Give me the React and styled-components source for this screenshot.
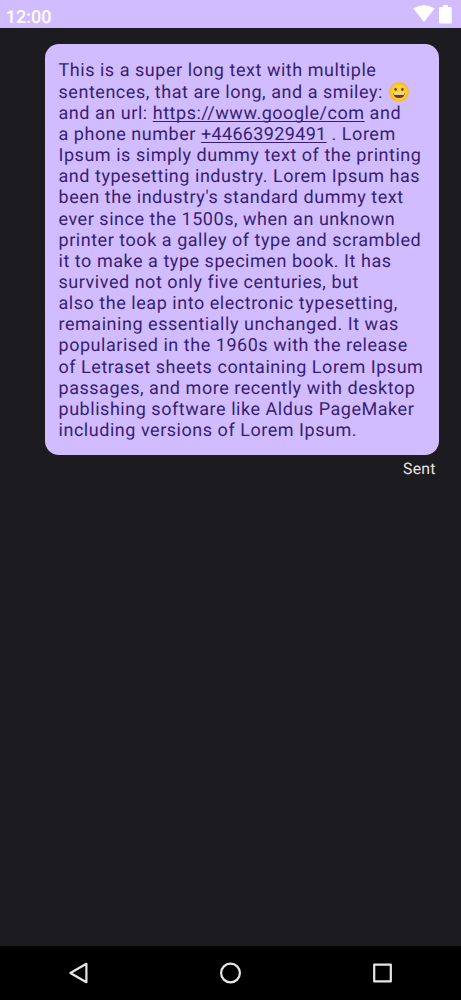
import React from "react";
import styled, { createGlobalStyle } from "styled-components";

const Global = createGlobalStyle`
  * { box-sizing: border-box; }
  body { margin: 0; background: #1c1b1f; font-family: Roboto, sans-serif; }
`;

const Screen = styled.div`
  display: flex;
  flex-direction: column;
  height: 1000px;
  background: #1c1b1f;
  text-rendering: geometricPrecision;
`;

const StatusBar = styled.header`
  display: flex;
  justify-content: space-between;
  height: 28px;
  padding: 5px 9px 0 5.8px;
  background: #d0bcff;
  color: #fff;
  font-size: 18px;
  font-weight: 500;
  line-height: 26px;
`;

const StatusIcons = styled.div`
  display: flex;
  gap: 4px;
`;

const Messages = styled.main`
  display: flex;
  flex: 1;
  flex-direction: column;
  align-items: flex-end;
  padding: 16px 22.5px 0 45px;
`;

const Bubble = styled.div`
  width: 393.5px;
  height: 411px;
  padding: 16.45px 14px 14px 13.5px;
  border-radius: 14px;
  background: #d0bcff;
  color: #381e72;
  font-size: 18px;
  letter-spacing: 0.535px;
  line-height: 21.16px;
`;

const Line = styled.div`
  height: 21.16px;
  white-space: nowrap;
`;

const Link = styled.span`
  text-decoration: underline;
  text-decoration-thickness: 1px;
  text-underline-offset: 2px;
  text-decoration-skip-ink: none;
`;

const PhoneLink = styled(Link)`
  letter-spacing: 0.35px;
`;

const Receipt = styled.div`
  padding: 4px 3px 0 0;
  color: #e6e1e5;
  font-size: 15.8px;
  letter-spacing: 0.2px;
  line-height: 20px;
`;

const NavBar = styled.nav`
  display: flex;
  justify-content: center;
  gap: 128px;
  align-items: center;
  height: 54px;
  padding-right: 1px;
  background: #000;
`;

const NavIcon = styled.svg`
  width: 24px;
  height: 24px;
  fill: none;
  stroke: #e6e6e6;
  stroke-width: 2.2px;
  stroke-linejoin: round;
`;

const Smiley = styled.svg`
  width: 22px;
  height: 22px;
  margin: -3px 0;
  vertical-align: -2px;
`;

export default function App() {
  return (
    <Screen>
      <Global />
      <StatusBar>
        <span>12:00</span>
        <StatusIcons>
          <svg width="22" height="18" viewBox="0 0 22 18"><path d="M0.3 3.5Q11-3.5 21.7 3.5L11 17Z" fill="#fff" /></svg>
          <svg width="13" height="19" viewBox="0 0 13 19"><path d="M4 0h5v2h2.7q1 0 1 1v14.5q0 1-1 1H1q-1 0-1-1V3q0-1 1-1h3Z" fill="#fff" /></svg>
        </StatusIcons>
      </StatusBar>
      <Messages>
        <Bubble>
          <Line>This is a super long text with multiple</Line>
          <Line>
            sentences, that are long, and a smiley:{" "}
            <Smiley viewBox="0 0 22 22">
              <defs>
                <radialGradient id="face">
                  <stop offset="0.5" stopColor="#fdd835" />
                  <stop offset="1" stopColor="#f9b52c" />
                </radialGradient>
              </defs>
              <circle cx="11" cy="11" r="10" fill="url(#face)" />
              <ellipse cx="7.6" cy="8.3" rx="1.2" ry="1.6" fill="#5d4018" />
              <ellipse cx="14.4" cy="8.3" rx="1.2" ry="1.6" fill="#5d4018" />
              <path d="M5.2 12.2h11.6q-.6 4.9-5.8 4.9T5.2 12.2Z" fill="#6d3824" />
              <path d="M5.8 12.2h10.4l-.4 1.6H6.2Z" fill="#fff" />
            </Smiley>
          </Line>
          <Line>and an url: <Link>https://www.google/com</Link> and</Line>
          <Line>a phone number <PhoneLink>+44663929491</PhoneLink> . Lorem</Line>
          <Line>Ipsum is simply dummy text of the printing</Line>
          <Line>and typesetting industry. Lorem Ipsum has</Line>
          <Line>been the industry's standard dummy text</Line>
          <Line>ever since the 1500s, when an unknown</Line>
          <Line>printer took a galley of type and scrambled</Line>
          <Line>it to make a type specimen book. It has</Line>
          <Line>survived not only five centuries, but</Line>
          <Line>also the leap into electronic typesetting,</Line>
          <Line>remaining essentially unchanged. It was</Line>
          <Line>popularised in the 1960s with the release</Line>
          <Line>of Letraset sheets containing Lorem Ipsum</Line>
          <Line>passages, and more recently with desktop</Line>
          <Line>publishing software like Aldus PageMaker</Line>
          <Line>including versions of Lorem Ipsum.</Line>
        </Bubble>
        <Receipt>Sent</Receipt>
      </Messages>
      <NavBar>
        <NavIcon viewBox="0 0 24 24"><path d="M20.4 2.8v18.4L4.4 12Z" /></NavIcon>
        <NavIcon viewBox="0 0 24 24"><circle cx="12.5" cy="12" r="9.4" /></NavIcon>
        <NavIcon viewBox="0 0 24 24"><rect x="4.2" y="3.6" width="16.6" height="16.8" /></NavIcon>
      </NavBar>
    </Screen>
  );
}
